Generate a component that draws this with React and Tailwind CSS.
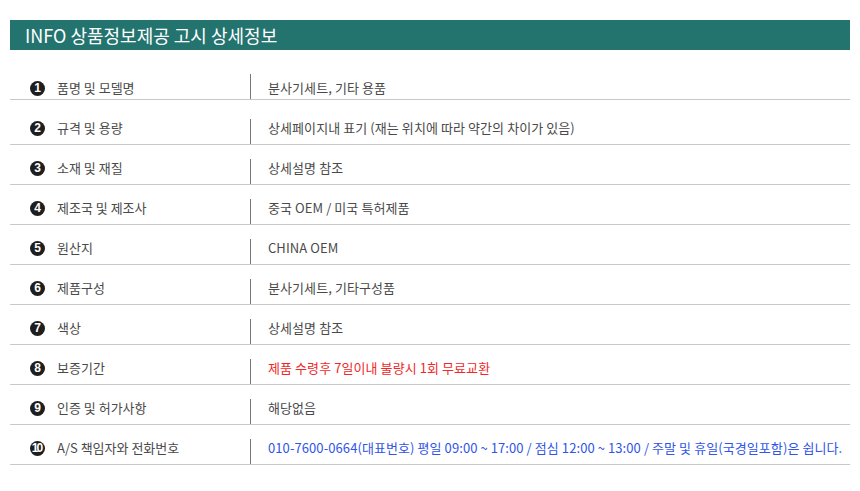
const ROWS = [
  { n: '1', label: '품명 및 모델명', value: '분사기세트, 기타 용품' },
  { n: '2', label: '규격 및 용량', value: '상세페이지내 표기 (재는 위치에 따라 약간의 차이가 있음)' },
  { n: '3', label: '소재 및 재질', value: '상세설명 참조' },
  { n: '4', label: '제조국 및 제조사', value: '중국 OEM / 미국 특허제품' },
  { n: '5', label: '원산지', value: 'CHINA OEM' },
  { n: '6', label: '제품구성', value: '분사기세트, 기타구성품' },
  { n: '7', label: '색상', value: '상세설명 참조' },
  { n: '8', label: '보증기간', value: '제품 수령후 7일이내 불량시 1회 무료교환', tone: 'red' },
  { n: '9', label: '인증 및 허가사항', value: '해당없음' },
  {
    n: '10',
    label: 'A/S 책임자와 전화번호',
    value: '010-7600-0664(대표번호) 평일 09:00 ~ 17:00 / 점심 12:00 ~ 13:00 / 주말 및 휴일(국경일포함)은 쉽니다.',
    tone: 'blue',
  },
];

const FONT = { fontFamily: '"Noto Sans CJK KR", "Noto Sans", sans-serif' };

function Bullet({ n }) {
  const wide = n.length > 1;
  return (
    <span
      className={`flex h-[15px] w-[15px] shrink-0 items-center justify-center rounded-full bg-[#1e1e1e] font-bold leading-none text-white ${
        wide ? 'text-[12px] tracking-[-2px] pr-[2px]' : 'text-[12px]'
      }`}
      style={{ fontFamily: '"Liberation Sans", Arial, sans-serif' }}
    >
      {n}
    </span>
  );
}

function InfoRow({ row, index }) {
  // first two rows sit a bit differently in the original
  const height = index === 0 ? 'h-[50px]' : index === 1 ? 'h-[45px]' : 'h-[40px]';
  const tone =
    row.tone === 'red' ? 'text-[#f02828]' : row.tone === 'blue' ? 'text-[#2f55e8]' : 'text-[#4a4a4a]';

  return (
    <div className={`flex items-end border-b border-[#c8c8c8] ${height}`}>
      <div className={`flex h-[25px] w-[240px] items-start pl-[20px] ${index === 0 ? 'pt-[5px]' : ''}`}>
        <div className="flex h-[18px] items-center gap-[12px]">
          <Bullet n={row.n} />
          <span className="whitespace-nowrap text-[13px] leading-[18px] text-[#4a4a4a]">{row.label}</span>
        </div>
      </div>
      <div className={`flex h-[25px] flex-1 items-start border-l border-[#777] pl-[17px] ${index === 0 ? 'pt-[5px]' : ''}`}>
        <span className={`whitespace-nowrap text-[13px] leading-[18px] tracking-[0.08px] ${tone}`}>{row.value}</span>
      </div>
    </div>
  );
}

export default function App() {
  return (
    <div className="h-[491px] w-[860px] bg-white px-[10px] pt-[20px]" style={FONT}>
      <div className="flex h-[30px] items-center bg-[#23736f] pl-[15px]">
        <h2 className="text-[18px] leading-none text-white">INFO 상품정보제공 고시 상세정보</h2>
      </div>
      {ROWS.map((row, i) => (
        <InfoRow key={row.n} row={row} index={i} />
      ))}
    </div>
  );
}
